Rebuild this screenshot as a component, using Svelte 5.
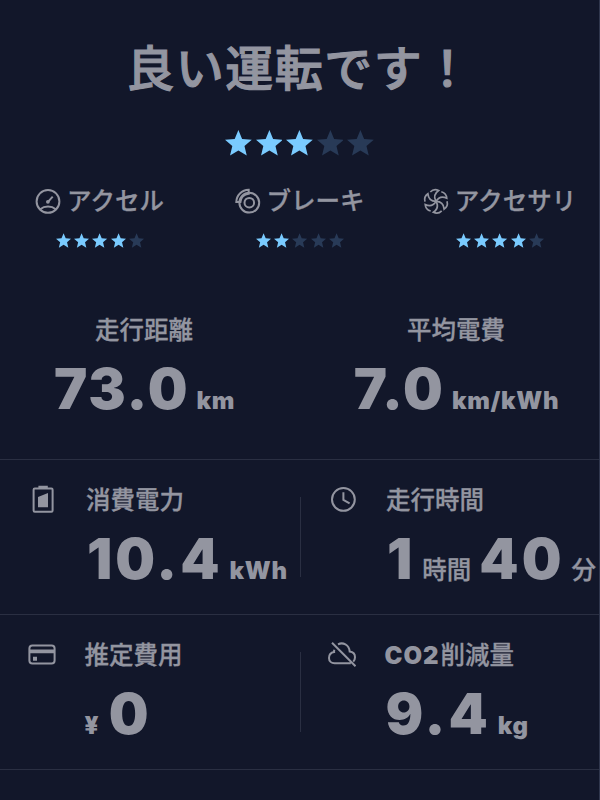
<script>
  const title = '良い運転です！'
  const score = 3

  const ratings = [
    { icon: 'gauge', label: 'アクセル', stars: 4 },
    { icon: 'brake', label: 'ブレーキ', stars: 2 },
    { icon: 'fan', label: 'アクセサリ', stars: 4 }
  ]

  const totals = [
    { label: '走行距離', value: '73.0', unit: 'km' },
    { label: '平均電費', value: '7.0', unit: 'km/kWh' }
  ]

  const rows = [
    [
      { icon: 'battery', label: '消費電力', parts: [{ n: '10.4' }, { u: 'kWh' }] },
      { icon: 'clock', label: '走行時間', parts: [{ n: '1' }, { u: '時間', cjk: true }, { n: '40' }, { u: '分', cjk: true }] }
    ],
    [
      { icon: 'card', label: '推定費用', parts: [{ u: '¥', yen: true }, { n: '0' }] },
      { icon: 'cloud', latin: 'CO2', label: '削減量', parts: [{ n: '9.4' }, { u: 'kg' }] }
    ]
  ]
</script>

{#snippet stars(count, big)}
  <div class="stars" class:big>
    {#each [1, 2, 3, 4, 5] as i}
      <svg class="star" class:on={i <= count} viewBox="0 0 26 25">
        <path d="M13 0l3.6 8.6 9.4.8-7.1 6.1 2.2 9.2-8.1-4.9-8.1 4.9 2.2-9.2L0 9.4l9.4-.8z" />
      </svg>
    {/each}
  </div>
{/snippet}

{#snippet icon(name)}
  <svg class="icon" viewBox="0 0 28 28">
    {#if name === 'gauge'}
      <circle cx="14" cy="14.4" r="11.4" />
      <path d="M6.2 22.2c4.4-3.6 11.2-3.6 15.6 0M14 14.9l4.7-5.2" />
      <circle class="solid" cx="13.9" cy="14.8" r="1.9" />
    {:else if name === 'brake'}
      <circle cx="15.3" cy="15.7" r="9.9" />
      <circle cx="15.3" cy="15.7" r="4.8" />
      <path d="M2.3 15.1C2.3 8.4 7.8 2.8 14.7 2.7v4.1c-4.7.3-8 3.8-8.3 8.3z" />
    {:else if name === 'fan'}
      <g class="thin">
        {#each [0, 60, 120, 180, 240, 300] as a}
          <path transform="translate(0 .4) rotate({a} 14 14)" d="M14 14C12 10.500 12.200 6.200 16.600 3.100C13.600 1.700 10.500 2.300 8.300 4.600" />
        {/each}
      </g>
    {:else if name === 'battery'}
      <rect x="4.6" y="3.5" width="19" height="23.2" rx="1.2" />
      <path class="solid" d="M9.4.7h9.4v3H9.4zM9 12.1l10-4v14.2H9z" />
    {:else if name === 'clock'}
      <circle cx="14.4" cy="14.4" r="11.4" />
      <path d="M14.4 7.2v7.7l6.2 3.4" />
    {:else if name === 'card'}
      <rect x="1.4" y="5.4" width="25.2" height="18" rx="3" />
      <path class="solid" d="M1.5 9.5h25v3.8h-25zM5 16.7h4v4H5z" />
    {:else if name === 'cloud'}
      <path d="M6.3 9.7c-.2.9-.3 1.6-.2 2.4C3 12.7 1 15 1 18c0 3.2 2.4 5.2 5.6 5.2h16.2M10 4.3c4.8-2.4 11.1.2 11.7 7.3 3.2.4 5.3 2.7 5.3 5.7 0 1.9-.7 3.3-1.7 4.3M4 2.7l23.500 23.500" />
    {/if}
  </svg>
{/snippet}

<div class="screen">
  <h1>{title}</h1>
  {@render stars(score, true)}

  <div class="ratings">
    {#each ratings as r}
      <div class="rating">
        <div class="rating-label">{@render icon(r.icon)}<span>{r.label}</span></div>
        {@render stars(r.stars, false)}
      </div>
    {/each}
  </div>

  <div class="totals">
    {#each totals as t}
      <div class="total">
        <div class="label">{t.label}</div>
        <div class="value"><span class="num">{t.value}</span><span class="unit">{t.unit}</span></div>
      </div>
    {/each}
  </div>

  {#each rows as row}
    <div class="row">
      {#each row as m}
        <div class="metric">
          <div class="metric-icon">{@render icon(m.icon)}</div>
          <div class="metric-body">
            <div class="label">{#if m.latin}<span class="latin">{m.latin}</span>{/if}{m.label}</div>
            <div class="value">
              {#each m.parts as p}
                {#if p.n}<span class="num">{p.n}</span>{:else}<span class="unit" class:cjk={p.cjk} class:yen={p.yen}>{p.u}</span>{/if}
              {/each}
            </div>
          </div>
        </div>
      {/each}
    </div>
  {/each}
</div>

<style>
  :global(body) { background: #12172a; }

  .screen { box-sizing: border-box; width: 600px; height: 800px; overflow: hidden; padding-top: 37px; background: #12172a; border-right: 1px solid #30374d; color: #9395a0; font-family: Inter, 'Noto Sans CJK JP', sans-serif; }
  h1 { margin: 0; height: 64px; line-height: 64px; font-size: 48px; font-weight: 500; letter-spacing: 1.5px; text-align: center; white-space: nowrap; -webkit-text-stroke: 1.1px currentColor; }

  .stars { display: flex; justify-content: center; gap: 3px; }
  .star { width: 15.2px; height: 15px; fill: #283a57; }
  .star.on { fill: #7acbff; }
  .stars.big { gap: 3.7px; margin-top: 29px; }
  .stars.big .star { width: 26.8px; height: 26px; }

  .icon { display: block; flex: none; width: 28px; height: 28px; fill: none; stroke: currentColor; stroke-width: 2; }
  .icon .solid { fill: currentColor; stroke: none; }
  .icon .thin { stroke-width: 1.7; }

  .ratings { display: grid; grid-template-columns: repeat(3, 200px); margin-top: 28px; height: 128px; }
  .rating-label { display: flex; align-items: center; justify-content: center; gap: 5px; height: 34px; margin: 0 2px 15px 0; font-size: 24.5px; font-weight: 500; line-height: 34px; white-space: nowrap; }
  .rating-label span { -webkit-text-stroke: 0.3px currentColor; }

  .totals { display: grid; grid-template-columns: 288px 288px; gap: 24px; height: 147px; }
  .total { display: flex; flex-direction: column; align-items: center; }
  .label { height: 36px; line-height: 36px; font-size: 24.5px; font-weight: 500; white-space: nowrap; -webkit-text-stroke: 0.3px currentColor; }
  .latin { margin-right: 1px; font-weight: 900; font-size: 24px; letter-spacing: 1px; -webkit-text-stroke: 0; }
  .value { display: flex; align-items: baseline; gap: 7px; height: 60px; margin-top: 11px; line-height: 60px; white-space: nowrap; }
  .num { padding-left: 1px; font-size: 56px; font-weight: 900; letter-spacing: 2px; }
  .unit { font-size: 24px; font-weight: 900; letter-spacing: 0.7px; }
  .unit.cjk { font-weight: 500; font-size: 24.5px; letter-spacing: 0; -webkit-text-stroke: 0.3px currentColor; }
  .unit.yen { margin-right: 1.5px; }
  .row .num { letter-spacing: 3px; }

  .row { display: grid; grid-template-columns: 300px 300px; box-sizing: border-box; height: 155px; padding-top: 22px; border-top: 1px solid #2a2f42; }
  .row:last-child { height: 156px; border-bottom: 1px solid #2a2f42; }
  .metric { display: flex; height: 110px; }
  .metric + .metric { background: linear-gradient(#2a2f42, #2a2f42) 0 15px / 1px 80px no-repeat; }
  .metric-icon { width: 57px; margin: 3px 0 0 29px; }
  .row:last-child .metric-icon { width: 56.5px; margin-left: 28px; }
</style>
